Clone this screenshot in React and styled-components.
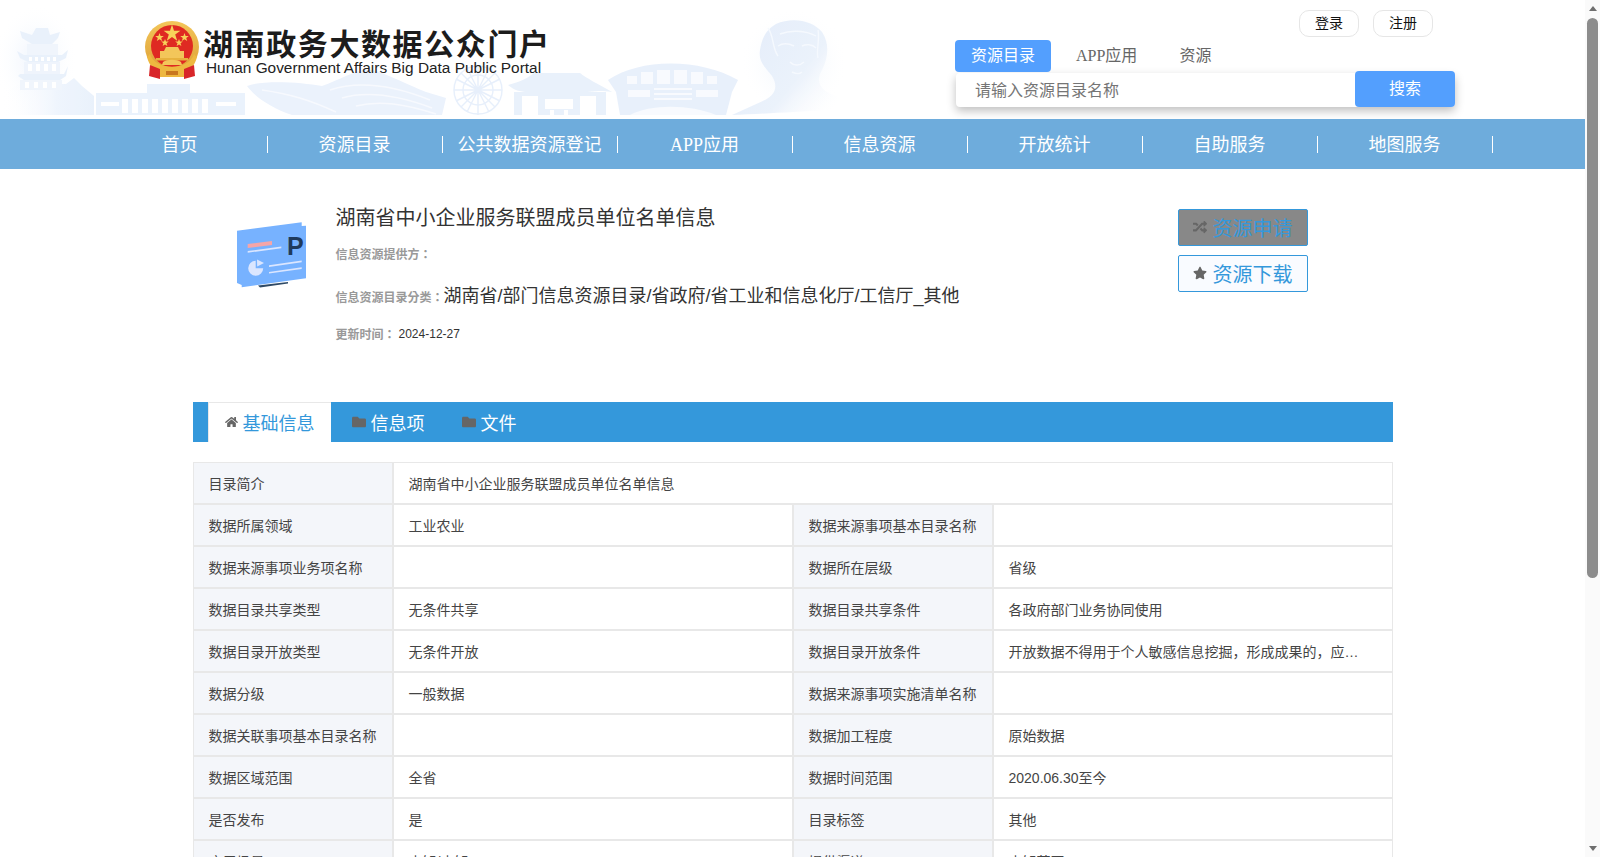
import React from "react"
import styled, { createGlobalStyle } from "styled-components"
import { FaHome, FaFolder, FaRandom, FaStar } from "react-icons/fa"

const serif = `"Liberation Serif", "Noto Sans CJK SC", serif`
const sans = `"Liberation Sans", "Noto Sans CJK SC", sans-serif`

const GlobalStyle = createGlobalStyle`
  html, body { margin: 0; padding: 0; background: #fff; }
  body { padding-right: 15px; font-family: ${sans}; color: #333; }
  * { box-sizing: border-box; }
`

const navItems = ["首页", "资源目录", "公共数据资源登记", "APP应用", "信息资源", "开放统计", "自助服务", "地图服务"]

const rows = [
  [["目录简介", "湖南省中小企业服务联盟成员单位名单信息"]],
  [["数据所属领域", "工业农业"], ["数据来源事项基本目录名称", ""]],
  [["数据来源事项业务项名称", ""], ["数据所在层级", "省级"]],
  [["数据目录共享类型", "无条件共享"], ["数据目录共享条件", "各政府部门业务协同使用"]],
  [["数据目录开放类型", "无条件开放"], ["数据目录开放条件", "开放数据不得用于个人敏感信息挖掘，形成成果的，应当注明数据来源"]],
  [["数据分级", "一般数据"], ["数据来源事项实施清单名称", ""]],
  [["数据关联事项基本目录名称", ""], ["数据加工程度", "原始数据"]],
  [["数据区域范围", "全省"], ["数据时间范围", "2020.06.30至今"]],
  [["是否发布", "是"], ["目录标签", "其他"]],
  [["应用场景", "未知/未知"], ["提供渠道", "未知范围"]],
]

const Banner = () => (
  <BannerArt viewBox="0 0 870 115" width="870" height="115">
    <defs>
      <radialGradient id="glow" cx="0.5" cy="0.5" r="0.5">
        <stop offset="0" stopColor="#eaf2fc" />
        <stop offset="1" stopColor="#ffffff" stopOpacity="0" />
      </radialGradient>
      <linearGradient id="baseFade" x1="0" y1="0" x2="1" y2="0">
        <stop offset="0" stopColor="#ffffff" stopOpacity="0" />
        <stop offset="0.6" stopColor="#edf4fd" />
        <stop offset="1" stopColor="#e6effb" />
      </linearGradient>
      <linearGradient id="statue" x1="0" y1="0" x2="1" y2="0.6">
        <stop offset="0" stopColor="#dfeafa" />
        <stop offset="0.65" stopColor="#e8f0fb" />
        <stop offset="1" stopColor="#ffffff" stopOpacity="0.2" />
      </linearGradient>
    </defs>
    {/* tower */}
    <ellipse cx="36" cy="60" rx="42" ry="56" fill="url(#glow)" />
    <path d="M0 115V92L20 84H66L74 78L82 86L94 96V115Z" fill="url(#baseFade)" />
    <g fill="#e6effb">
      <path d="M36 28H48L50 35L60 32L58 38L52 44H32L22 38L20 31L32 35Z" />
      <path d="M27 44H58V55H27Z" fill="#eef4fc" />
      <path d="M24 55H62L68 50L66 58L58 62H28L20 58L17 51Z" />
      <path d="M24 62H60V74H24Z" fill="#edf3fc" />
      <path d="M20 74H64L68 66L66 76L60 80H24L18 76Z" />
      <path d="M20 80H62V90H20Z" fill="#eef4fc" />
    </g>
    <g fill="#fff">
      <rect x="29" y="57" width="3" height="4" />
      <rect x="35" y="57" width="3" height="4" />
      <rect x="41" y="57" width="3" height="4" />
      <rect x="47" y="57" width="3" height="4" />
      <rect x="53" y="57" width="3" height="4" />
      <rect x="28" y="64" width="4" height="7" />
      <rect x="36" y="64" width="4" height="7" />
      <rect x="44" y="64" width="4" height="7" />
      <rect x="52" y="64" width="4" height="7" />
      <rect x="25" y="82" width="4" height="6" />
      <rect x="34" y="82" width="4" height="6" />
      <rect x="43" y="82" width="4" height="6" />
      <rect x="52" y="82" width="4" height="6" />
    </g>
    {/* hall */}
    <g fill="#e7f0fc">
      <path d="M147 84H190V93H147Z" />
      <path d="M96 93H245V115H96Z" />
    </g>
    <g fill="#fff">
      <rect x="101" y="102" width="18" height="4" />
      <rect x="122" y="99" width="6" height="14" />
      <rect x="132" y="99" width="6" height="14" />
      <rect x="142" y="99" width="6" height="14" />
      <rect x="152" y="99" width="6" height="14" />
      <rect x="162" y="99" width="6" height="14" />
      <rect x="172" y="99" width="6" height="14" />
      <rect x="182" y="99" width="6" height="14" />
      <rect x="192" y="99" width="6" height="14" />
      <rect x="202" y="99" width="6" height="14" />
      <rect x="216" y="102" width="20" height="4" />
    </g>
    {/* curved roof and peak */}
    <path d="M247 86C262 80 300 82 322 86C340 80 358 68 372 70C388 74 410 86 426 92L446 98L442 115H292C272 108 256 98 247 86Z" fill="#e8f0fc" />
    <g stroke="#f6f9fe" strokeWidth="1.5" fill="none">
      <path d="M262 90C290 94 310 100 336 112" />
      <path d="M330 90C360 80 395 86 430 100" />
      <path d="M342 98C370 90 400 96 432 108" />
      <path d="M356 106C380 100 405 104 436 114" />
    </g>
    {/* ferris wheel */}
    <g stroke="#e3edfb" strokeWidth="1.4" fill="none">
      <circle cx="478" cy="90" r="24" />
      <circle cx="478" cy="90" r="15" />
      <path d="M478 66V115M454 90H502M461 73L495 107M495 73L461 107M467 68L489 112M489 68L467 112M456 79L500 101M500 79L456 101" />
    </g>
    {/* pavilion */}
    <g fill="#e6effb">
      <path d="M508 85C520 82 528 78 534 73L580 73C586 78 598 84 612 92C598 90 592 92 588 92H528C520 92 514 90 508 85Z" />
      <path d="M514 92H606V115H514Z" />
    </g>
    <g fill="#fff">
      <rect x="522" y="96" width="16" height="19" />
      <rect x="545" y="99" width="28" height="10" />
      <rect x="580" y="96" width="16" height="19" />
      <rect x="550" y="110" width="4" height="5" />
      <rect x="564" y="110" width="4" height="5" />
    </g>
    {/* stadium */}
    <path d="M608 80C640 58 700 58 738 80L732 92L726 115H620L616 92Z" fill="#e5eefb" />
    <g fill="#f7fafe">
      <rect x="627" y="76" width="10" height="8" />
      <rect x="641" y="72" width="12" height="12" />
      <rect x="657" y="70" width="13" height="14" />
      <rect x="674" y="70" width="13" height="14" />
      <rect x="691" y="72" width="12" height="12" />
      <rect x="707" y="76" width="10" height="8" />
      <rect x="628" y="90" width="22" height="7" />
      <rect x="696" y="90" width="22" height="7" />
      <rect x="654" y="88" width="38" height="2" />
      <rect x="654" y="93" width="38" height="2" />
      <rect x="654" y="98" width="38" height="2" />
      <path d="M630 115C650 104 690 104 716 115Z" />
    </g>
    {/* statue */}
    <ellipse cx="794" cy="62" rx="54" ry="54" fill="url(#glow)" />
    <path d="M776 24C792 17 812 20 822 32C830 44 828 58 822 70C816 80 818 90 836 96L858 104L830 110C790 112 760 114 732 115L765 100C776 94 778 86 772 76C766 68 758 62 760 50C762 38 766 30 776 24Z" fill="url(#statue)" />
    <g stroke="#f4f8fe" strokeWidth="1.4" fill="none">
      <path d="M778 46C784 42 790 44 794 46M802 46C806 44 812 44 816 48" />
      <path d="M790 62C794 66 800 66 804 62M792 72C796 74 800 74 802 72" />
      <path d="M780 34C790 30 805 30 816 36" />
      <path d="M768 28C774 36 772 48 778 56M818 30C820 40 816 50 818 58" />
    </g>
  </BannerArt>
)

const Emblem = () => (
  <EmblemArt viewBox="0 0 54 58" width="54" height="58">
    <defs>
      <linearGradient id="gold" x1="0" y1="0" x2="0" y2="1">
        <stop offset="0" stopColor="#f3c65a" />
        <stop offset="1" stopColor="#dc9e34" />
      </linearGradient>
    </defs>
    <ellipse cx="27" cy="26" rx="27" ry="26" fill="url(#gold)" />
    <circle cx="27" cy="25" r="21" fill="#df2a22" />
    <path d="M27 3.5L29 9.8H35.4L30.2 13.6L32.2 19.8L27 16L21.8 19.8L23.8 13.6L18.6 9.8H25Z" fill="#f8d25a" />
    <path d="M14.5 12L15.6 15H18.8L16.2 17L17.2 20L14.5 18.2L11.8 20L12.8 17L10.2 15H13.4Z" fill="#f8d25a" />
    <path d="M39.5 12L40.6 15H43.8L41.2 17L42.2 20L39.5 18.2L36.8 20L37.8 17L35.2 15H38.4Z" fill="#f8d25a" />
    <path d="M20 18L21 20.6H23.8L21.5 22.3L22.4 25L20 23.4L17.6 25L18.5 22.3L16.2 20.6H19Z" fill="#f8d25a" />
    <path d="M34 18L35 20.6H37.8L35.5 22.3L36.4 25L34 23.4L31.6 25L32.5 22.3L30.2 20.6H33Z" fill="#f8d25a" />
    <path d="M21 26H33L35 30H39V37H15V30H19Z" fill="#f3c65a" />
    <path d="M11 37H43V39.5H11Z" fill="#e7b23e" />
    <path d="M5 33C10 50 44 50 49 33L52 36C50 44 46 48 41 50H13C8 48 4 44 2 36Z" fill="#eeb840" />
    <path d="M18 41C22 38 32 38 36 41L37 44H17Z" fill="#f3c65a" />
    <path d="M5 44L15 48V58L4 55Z M49 44L39 48V58L50 55Z" fill="#d8262a" />
    <path d="M15 48H39V56H15Z" fill="#eeb840" />
    <path d="M21 50H33V54H21Z" fill="#c8771f" />
  </EmblemArt>
)

const DataCard = () => (
  <CardArt viewBox="0 0 70 68" width="70" height="68">
    <path d="M21 64.5L51 61V62.5L23 66.5Z" fill="#2f4a66" />
    <path d="M0 9.7L64.7 1.3V5L69 4.7V57.3L4.7 66.3V64L0 62Z" fill="#77b2ff" />
    <path d="M10.7 23L35 20V24L10.7 27Z" fill="#f6a5a8" />
    <path d="M10.7 30L44.3 25.6V27.3L10.7 31.7Z" fill="#dbe6ff" />
    <path d="M18.7 39.8A7.5 7.5 0 1 0 26.2 47.3L18.7 47.3Z" fill="#dbe6ff" />
    <path d="M20 38.5L27 42L20.2 45.5Z" fill="#dbe6ff" />
    <path d="M32 44.2L64.7 39.5V41.2L32 45.9Z" fill="#dbe6ff" />
    <path d="M32 50.9L64.7 46.2V47.9L32 52.6Z" fill="#dbe6ff" />
    <text x="50" y="34" fontFamily="Liberation Sans, sans-serif" fontWeight="700" fontSize="25" fill="#1f3a5c">P</text>
  </CardArt>
)

const App = () => {
  return (
    <>
      <GlobalStyle />
      <Header>
        <Banner />
        <Logo>
          <Emblem />
          <LogoText>
            <LogoTitle>湖南政务大数据公众门户</LogoTitle>
            <LogoSub>Hunan Government Affairs Big Data Public Portal</LogoSub>
          </LogoText>
        </Logo>
        <SearchArea>
          <UserLinks>
            <UserLink>登录</UserLink>
            <UserLink>注册</UserLink>
          </UserLinks>
          <SearchTabs>
            <SearchTab active>资源目录</SearchTab>
            <SearchTab>APP应用</SearchTab>
            <SearchTab>资源</SearchTab>
          </SearchTabs>
          <SearchBox>
            <SearchInput placeholder="请输入资源目录名称" />
            <SearchButton>搜索</SearchButton>
          </SearchBox>
        </SearchArea>
      </Header>
      <Nav>
        <NavInner>
          {navItems.map((item) => (
            <NavItem key={item}>{item}</NavItem>
          ))}
        </NavInner>
      </Nav>
      <Main>
        <Summary>
          <DataCard />
          <SummaryText>
            <Title>湖南省中小企业服务联盟成员单位名单信息</Title>
            <MetaRow height={43}>
              <MetaLabel>信息资源提供方：</MetaLabel>
            </MetaRow>
            <MetaRow height={42}>
              <MetaLabel>信息资源目录分类：</MetaLabel>
              <CategoryValue>湖南省/部门信息资源目录/省政府/省工业和信息化厅/工信厅_其他</CategoryValue>
            </MetaRow>
            <MetaRow height={32}>
              <MetaLabel>更新时间：</MetaLabel>
              <DateValue>2024-12-27</DateValue>
            </MetaRow>
          </SummaryText>
          <Actions>
            <ActionButton filled>
              <FaRandom />
              资源申请
            </ActionButton>
            <ActionButton>
              <FaStar />
              资源下载
            </ActionButton>
          </Actions>
        </Summary>
        <TabBar>
          <Tab active>
            <FaHome />
            基础信息
          </Tab>
          <Tab>
            <FaFolder />
            信息项
          </Tab>
          <Tab>
            <FaFolder />
            文件
          </Tab>
        </TabBar>
        <InfoTable>
          {rows.map((row) => (
            <InfoRow key={row[0][0]}>
              {row.map(([label, value]) => (
                <React.Fragment key={label}>
                  <LabelCell>{label}</LabelCell>
                  <ValueCell wide={row.length === 1}>{value}</ValueCell>
                </React.Fragment>
              ))}
            </InfoRow>
          ))}
        </InfoTable>
      </Main>
      <Scrollbar>
        <ScrollArrow />
        <ScrollThumb />
        <ScrollArrow down />
      </Scrollbar>
    </>
  )
}

const Header = styled.header`
  position: relative;
  height: 119px;
  display: flex;
  justify-content: space-between;
  padding: 0 130px 0 145px;
  overflow: hidden;
`

const BannerArt = styled.svg`
  position: absolute;
  left: 0;
  top: 0;
  opacity: 0.85;
`

const Logo = styled.div`
  position: relative;
  display: flex;
  align-items: flex-start;
  padding-top: 21px;
`

const EmblemArt = styled.svg`
  flex: none;
`

const LogoText = styled.div`
  margin-left: 4px;
  padding-top: 8px;
`

const LogoTitle = styled.div`
  font-size: 30px;
  line-height: 31px;
  font-weight: 700;
  letter-spacing: 1.6px;
  color: #1c1c1c;
  white-space: nowrap;
`

const LogoSub = styled.div`
  margin: -1px 0 0 3px;
  font-size: 15.4px;
  line-height: 18px;
  color: #222;
  white-space: nowrap;
`

const SearchArea = styled.div`
  position: relative;
  width: 500px;
`

const UserLinks = styled.div`
  display: flex;
  justify-content: flex-end;
  gap: 14px;
  padding: 10px 22px 0 0;
`

const UserLink = styled.a`
  width: 60px;
  height: 27px;
  border: 1px solid #e6e6e6;
  border-radius: 10px;
  background: #fff;
  font-size: 14px;
  line-height: 25px;
  text-align: center;
  color: #111;
  font-family: ${serif};
`

const SearchTabs = styled.div`
  display: flex;
  margin-top: 3px;
`

const SearchTab = styled.div`
  height: 32px;
  padding: 0 ${({ active }) => (active ? "16px" : "21px")};
  margin-right: ${({ active }) => (active ? "4px" : "0")};
  border-radius: 4px;
  font-family: ${serif};
  font-size: 16px;
  line-height: 32px;
  color: ${({ active }) => (active ? "#fff" : "#666")};
  background: ${({ active }) => (active ? "#539ffe" : "transparent")};
`

const SearchBox = styled.div`
  display: flex;
  height: 34px;
  margin: 1px 0 0 1px;
  border-radius: 4px;
  background: #fff;
  box-shadow: 0 4px 10px rgba(0, 0, 0, 0.25);
`

const SearchInput = styled.input`
  flex: 1;
  min-width: 0;
  border: 0;
  outline: 0;
  padding: 1px 0 0 19px;
  background: transparent;
  font-family: ${serif};
  font-size: 16px;

  &::placeholder {
    color: #757575;
  }
`

const SearchButton = styled.button`
  flex: none;
  width: 100px;
  height: 36px;
  margin-top: -2px;
  border: 0;
  border-radius: 4px;
  background: #539ffe;
  color: #fff;
  font-family: ${serif};
  font-size: 16px;
  line-height: 32px;
  padding: 0 0 1px;
`

const Nav = styled.nav`
  height: 50px;
  background: #6eacdc;
`

const NavInner = styled.div`
  width: 1400px;
  height: 100%;
  margin: 0 auto;
  display: flex;
  align-items: center;
`

const NavItem = styled.a`
  width: 175px;
  height: 17px;
  border-right: 1px solid #fff;
  font-family: ${serif};
  font-size: 18px;
  line-height: 19px;
  text-align: center;
  color: #fff;
  white-space: nowrap;
`

const Main = styled.main`
  width: 1200px;
  margin: 0 auto;
  padding-bottom: 378px;
`

const Summary = styled.section`
  display: flex;
  align-items: flex-start;
  height: 233px;
  padding: 31px 85px 0 44px;
`

const CardArt = styled.svg`
  flex: none;
  margin-top: 21px;
`

const SummaryText = styled.div`
  flex: 1;
  margin-left: 29px;
`

const Title = styled.h1`
  margin: 0;
  height: 32px;
  font-size: 20px;
  font-weight: 400;
  line-height: 36px;
  color: #333;
`

const MetaRow = styled.div`
  display: flex;
  align-items: center;
  height: ${({ height }) => height}px;
`

const MetaLabel = styled.span`
  font-family: "Liberation Sans", "Noto Sans CJK TC", sans-serif;
  font-size: 12px;
  font-weight: 700;
  color: #999;
`

const CategoryValue = styled.span`
  font-size: 18px;
  color: #333;
  margin-top: -4px;
`

const DateValue = styled.span`
  margin: 1px 0 0 3px;
  font-size: 12px;
  color: #333;
`

const Actions = styled.div`
  flex: none;
  display: flex;
  flex-direction: column;
  gap: 9px;
  width: 130px;
  padding-top: 9px;
`

const ActionButton = styled.a`
  display: flex;
  align-items: center;
  gap: 6px;
  height: 37px;
  padding: 0 0 1px 14px;
  border: 1px solid #3498db;
  border-radius: 2px;
  background: ${({ filled }) => (filled ? "#888" : "#f9fbff")};
  color: #3498db;
  font-size: 20px;

  svg {
    width: 14px;
    height: 14px;
    color: #666;
  }
`

const TabBar = styled.div`
  display: flex;
  height: 40px;
  padding-left: 15px;
  background: #3498db;
`

const Tab = styled.a`
  display: flex;
  align-items: center;
  gap: 5px;
  height: 40px;
  padding: ${({ active }) => (active ? "0 16px 1px 16px" : "0 16px 0 21px")};
  border: ${({ active }) => (active ? "1px solid #e8e8e8" : "0")};
  border-bottom: 0;
  border-right: 0;
  background: ${({ active }) => (active ? "#fff" : "transparent")};
  color: ${({ active }) => (active ? "#3498db" : "#fff")};
  font-size: 18px;

  svg {
    width: ${({ active }) => (active ? "13px" : "14px")};
    height: 14px;
    color: #666;
  }
`

const InfoTable = styled.div`
  margin-top: 20px;
`

const InfoRow = styled.div`
  display: flex;
  height: 42px;
`

const LabelCell = styled.div`
  flex: none;
  width: 200px;
  padding: 0 14px 0 15px;
  border: 1px solid #e8e8e8;
  background: #f4f6fa;
  font-size: 14px;
  line-height: 42px;
  color: #444;
  white-space: nowrap;
`

const ValueCell = styled.div`
  flex: none;
  width: ${({ wide }) => (wide ? "1000px" : "400px")};
  padding: 0 29px 0 15px;
  border: 1px solid #e8e8e8;
  font-size: 14px;
  line-height: 42px;
  color: #444;
  white-space: nowrap;
  overflow: hidden;
  text-overflow: ellipsis;
`

const Scrollbar = styled.div`
  position: fixed;
  top: 0;
  right: 0;
  bottom: 0;
  width: 15px;
  display: flex;
  flex-direction: column;
  align-items: center;
  background: #fafafa;
`

const ScrollArrow = styled.div`
  flex: none;
  width: 0;
  height: 0;
  margin: ${({ down }) => (down ? "auto 0 6px" : "6px 0 0")};
  border-left: 4px solid transparent;
  border-right: 4px solid transparent;
  border-bottom: ${({ down }) => (down ? "0" : "5px solid #6e6e6e")};
  border-top: ${({ down }) => (down ? "5px solid #6e6e6e" : "0")};
`

const ScrollThumb = styled.div`
  flex: none;
  width: 11px;
  height: 560px;
  margin-top: 7px;
  border-radius: 6px;
  background: #8c8c8c;
`

export default App
